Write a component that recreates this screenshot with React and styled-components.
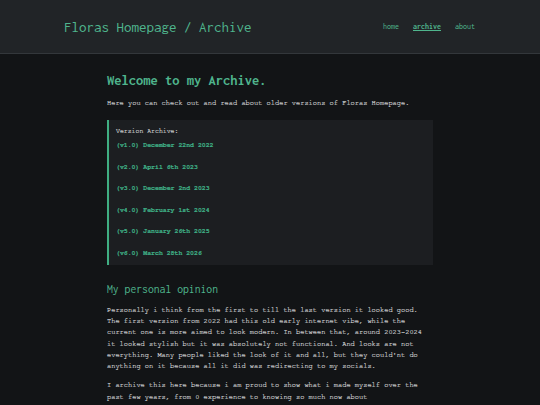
import React from 'react'
import styled, { createGlobalStyle } from 'styled-components'

const GlobalStyle = createGlobalStyle`
  html, body {
    margin: 0;
    padding: 0;
    background: #121416;
    overflow: hidden;
  }
  body {
    font-family: "FreeMono", "Courier New", monospace;
    color: #c4c5c7;
    -webkit-text-stroke: 0.2px currentColor;
    -webkit-font-smoothing: antialiased;
  }
`

const versions = [
  '(v1.0) December 22nd 2022',
  '(v2.0) April 6th 2023',
  '(v3.0) December 2nd 2023',
  '(v4.0) February 1st 2024',
  '(v5.0) January 26th 2025',
  '(v6.0) March 28th 2026',
]

function App() {
  return (
    <Page>
      <GlobalStyle />
      <Header>
        <HeaderInner>
          <SiteTitle>Floras Homepage / Archive</SiteTitle>
          <Nav>
            <NavLink href="#">home</NavLink>
            <NavLink href="#" $active>archive</NavLink>
            <NavLink href="#">about</NavLink>
          </Nav>
        </HeaderInner>
      </Header>
      <Main>
        <Heading>Welcome to my Archive.</Heading>
        <Text>Here you can check out and read about older versions of Floras Homepage.</Text>
        <ArchiveBox>
          <BoxLabel>Version Archive:</BoxLabel>
          {versions.map((v) => (
            <VersionLink key={v} href="#">{v}</VersionLink>
          ))}
        </ArchiveBox>
        <SubHeading>My personal opinion</SubHeading>
        <Body>
          Personally i think from the first to till the last version it looked good.
          The first version from 2022 had this old early internet vibe, while the
          current one is more aimed to look modern. In between that, around 2023-2024
          it looked stylish but it was absolutely not functional. And looks are not
          everything. Many people liked the look of it and all, but they could'nt do
          anything on it because all it did was redirecting to my socials.
        </Body>
        <Body>
          I archive this here because i am proud to show what i made myself over the
          past few years, from 0 experience to knowing so much now about
          webdevelopment, programming and design.
        </Body>
      </Main>
    </Page>
  )
}

export default App

const Page = styled.div`
  min-height: 100vh;
`

const Header = styled.header`
  height: 53px;
  background: #212427;
  border-bottom: 1.5px solid #33373b;
`

const HeaderInner = styled.div`
  width: 412px;
  height: 100%;
  margin: 0 auto;
  display: flex;
  align-items: center;
  justify-content: space-between;
`

const GreenHeading = styled.h1`
  margin: 0;
  font-family: "Inconsolata", "DejaVu Sans Mono", monospace;
  font-weight: normal;
  color: #4fb58d;
  -webkit-text-stroke: 0;
`

const SiteTitle = styled(GreenHeading)`
  font-size: 15px;
`

const Nav = styled.nav`
  display: flex;
  gap: 14px;
  padding-right: 1px;
`

const NavLink = styled.a`
  font-family: "Inconsolata", "DejaVu Sans Mono", monospace;
  font-size: 8px;
  color: #4fb58d;
  -webkit-text-stroke: 0;
  text-decoration: ${(p) => (p.$active ? 'underline' : 'none')};
  font-weight: ${(p) => (p.$active ? 'bold' : 'normal')};
`

const Main = styled.main`
  width: 326px;
  margin: 0 auto;
  padding-top: 19px;
`

const Heading = styled(GreenHeading).attrs({ as: 'h2' })`
  font-weight: bold;
  font-size: 14.5px;
  line-height: 16px;
`

const SubHeading = styled(GreenHeading).attrs({ as: 'h3' })`
  margin-top: 17px;
  font-size: 11.7px;
  line-height: 14px;
`

const Text = styled.p`
  margin: 8px 0 0;
  font-size: 7px;
  line-height: 12px;
`

const Body = styled.p`
  margin: 8px 0 0;
  font-size: 7px;
  line-height: 11.35px;
  & + & {
    margin-top: 7.6px;
  }
`

const ArchiveBox = styled.div`
  margin-top: 11px;
  background: #1c1e21;
  border-left: 2px solid #3fae82;
  padding: 6px 0 7px 7px;
  display: flex;
  flex-direction: column;
`

const BoxLabel = styled.span`
  font-size: 6.5px;
  line-height: 10px;
  color: #c8c9ca;
`

const VersionLink = styled.a`
  font-size: 6.5px;
  line-height: 10px;
  font-weight: bold;
  color: #3fae85;
  text-decoration: none;
  margin-top: 11.5px;
  &:first-of-type {
    margin-top: 4px;
  }
`
